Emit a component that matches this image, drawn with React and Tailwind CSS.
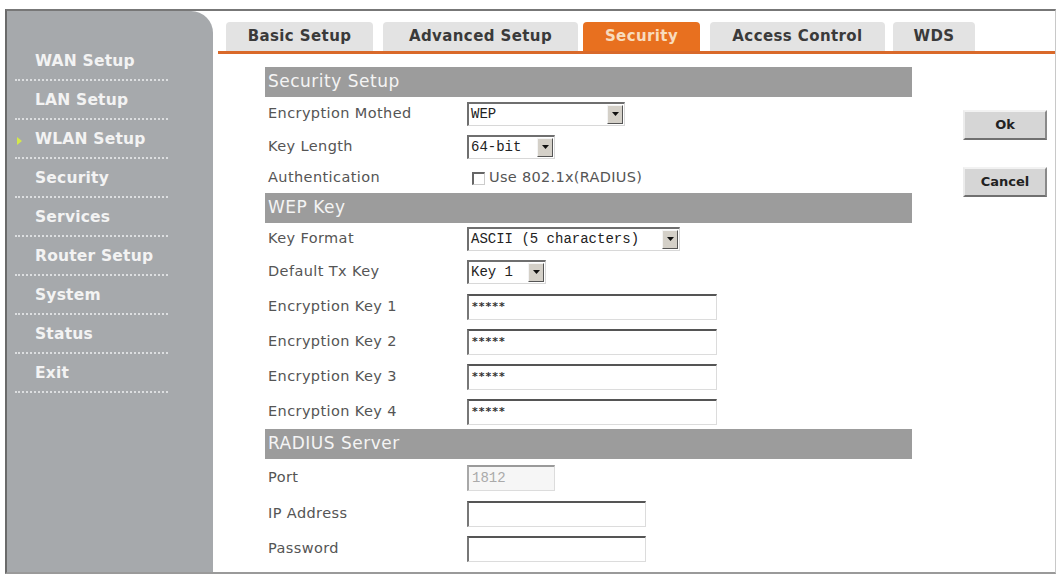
import React from 'react';

const menu = ['WAN Setup', 'LAN Setup', 'WLAN Setup', 'Security', 'Services', 'Router Setup', 'System', 'Status', 'Exit'];

const tabs = [
  { label: 'Basic Setup', w: 'w-[147px]', gap: 'mr-[10px]' },
  { label: 'Advanced Setup', w: 'w-[195px]', gap: 'mr-[5px]' },
  { label: 'Security', w: 'w-[117px]', gap: 'mr-[10px]', active: true },
  { label: 'Access Control', w: 'w-[175px]', gap: 'mr-[8px]' },
  { label: 'WDS', w: 'w-[82px]', gap: '' },
];

const sans = { fontFamily: '"DejaVu Sans", Verdana, sans-serif' };
const serif = { fontFamily: '"Liberation Mono", "Courier New", monospace' };

function SectionBar({ title }) {
  return (
    <div className="h-[30px] bg-[#9c9c9c] flex items-center pl-[3px] text-[17px] text-[#f4f4f4] tracking-[0.5px]">
      {title}
    </div>
  );
}

function Row({ label, h = 'h-[32px]', children }) {
  return (
    <div className={`${h} flex items-center`}>
      <div className="w-[202px] pl-[3px] text-[14.5px] text-[#555] tracking-[0.4px]">{label}</div>
      <div className="flex items-center">{children}</div>
    </div>
  );
}

function Select({ value, w }) {
  return (
    <div className={`${w} h-[24px] flex items-stretch bg-white border-t-2 border-l-2 border-[#6f6f6f] border-b border-r border-b-[#d8d8d8] border-r-[#d8d8d8]`}>
      <div className="flex-1 flex items-center pl-[2px] text-[14px] text-[#222] whitespace-nowrap overflow-hidden" style={serif}>
        {value}
      </div>
      <div className="w-[16px] my-[1px] mr-[1px] bg-[#d4d0c8] border border-t-[#f4f4f4] border-l-[#f4f4f4] border-b-[#555] border-r-[#555] flex items-center justify-center">
        <svg width="7" height="4" viewBox="0 0 7 4"><path d="M0 0h7L3.5 4z" fill="#111" /></svg>
      </div>
    </div>
  );
}

function TextBox({ w, value = '', disabled }) {
  return (
    <div
      className={`${w} h-[26px] flex items-center pl-[3px] border-t-2 border-l-2 border-b border-r border-b-[#dcdcdc] border-r-[#dcdcdc] ${
        disabled ? 'bg-[#f6f6f6] border-t-[#9a9a9a] border-l-[#a8a8a8] text-[#aaa] text-[14px]' : 'bg-white border-t-[#555] border-l-[#777] text-[#333] text-[11px] font-bold tracking-[1px]'
      }`}
      style={disabled ? serif : sans}
    >
      {value}
    </div>
  );
}

function Button({ children }) {
  return (
    <div className="w-[84px] h-[30px] bg-[#d6d6d6] border-2 border-t-[#f2f2f2] border-l-[#ececec] border-b-[#707070] border-r-[#8a8a8a] flex items-center justify-center text-[13px] font-bold text-[#222]">
      {children}
    </div>
  );
}

export default function App() {
  return (
    <div className="w-[1059px] h-[576px] bg-white pt-[9px] overflow-hidden" style={sans}>
      <div className="ml-[5px] mr-[3px] h-[565px] flex border-t-2 border-l-2 border-b-2 border-r border-t-[#777] border-l-[#6a6a6a] border-b-[#9a9a9a] border-r-[#c8c8c8]">
        {/* left navigation */}
        <div className="w-[206px] bg-[#a6a9ac] rounded-tr-[22px] pt-[31px]">
          {menu.map((item) => (
            <div
              key={item}
              className="ml-[8px] w-[153px] h-[39px] pt-[3px] flex items-center relative border-b-2 border-dotted border-[#dcdee0]"
            >
              {item === 'WLAN Setup' && (
                <svg className="absolute left-[2px] top-[17px]" width="5" height="8" viewBox="0 0 5 8">
                  <path d="M0 0l5 4-5 4z" fill="#d4e84a" />
                </svg>
              )}
              <span className="pl-[20px] text-[15.5px] font-bold text-[#f3f3f3] tracking-[0.2px]">{item}</span>
            </div>
          ))}
        </div>

        {/* main area */}
        <div className="flex-1 flex flex-col">
          <div className="mt-[11px] ml-[5px] pl-[8px] flex items-end border-b-[3px] border-[#d9692a]">
            {tabs.map((t) => (
              <div
                key={t.label}
                className={`${t.w} ${t.gap} h-[29px] rounded-t-[4px] flex items-center justify-center text-[15px] font-bold tracking-[0.4px] ${
                  t.active ? 'bg-[#e8701f] text-[#f8dcbc]' : 'bg-[#e3e3e3] text-[#3a3a3a]'
                }`}
              >
                {t.label}
              </div>
            ))}
          </div>

          <div className="flex pl-[52px] mt-[13px]">
            <div className="w-[647px]">
              <SectionBar title="Security Setup" />
              <Row label="Encryption Mothed" h="h-[33px]">
                <Select value="WEP" w="w-[158px]" />
              </Row>
              <Row label="Key Length" h="h-[33px]">
                <Select value="64-bit" w="w-[88px]" />
              </Row>
              <Row label="Authentication" h="h-[30px]">
                <div className="ml-[5px] w-[13px] h-[13px] bg-white border-t-2 border-l-2 border-[#666] border-b border-r border-b-[#ccc] border-r-[#ccc]" />
                <span className="ml-[4px] text-[14.5px] text-[#555] tracking-[0.3px]">Use 802.1x(RADIUS)</span>
              </Row>

              <SectionBar title="WEP Key" />
              <Row label="Key Format" h="h-[31px]">
                <Select value="ASCII (5 characters)" w="w-[213px]" />
              </Row>
              <Row label="Default Tx Key" h="h-[35px]">
                <Select value="Key 1" w="w-[79px]" />
              </Row>
              {[1, 2, 3, 4].map((n) => (
                <Row key={n} label={`Encryption Key ${n}`} h="h-[35px]">
                  <TextBox w="w-[250px]" value="*****" />
                </Row>
              ))}

              <SectionBar title="RADIUS Server" />
              <Row label="Port" h="h-[37px]">
                <TextBox w="w-[88px]" value="1812" disabled />
              </Row>
              <Row label="IP Address" h="h-[35px]">
                <TextBox w="w-[179px]" />
              </Row>
              <Row label="Password" h="h-[35px]">
                <TextBox w="w-[179px]" />
              </Row>
            </div>

            <div className="ml-[51px] pt-[43px] flex flex-col gap-[27px]">
              <Button>Ok</Button>
              <Button>Cancel</Button>
            </div>
          </div>
        </div>
      </div>
    </div>
  );
}
